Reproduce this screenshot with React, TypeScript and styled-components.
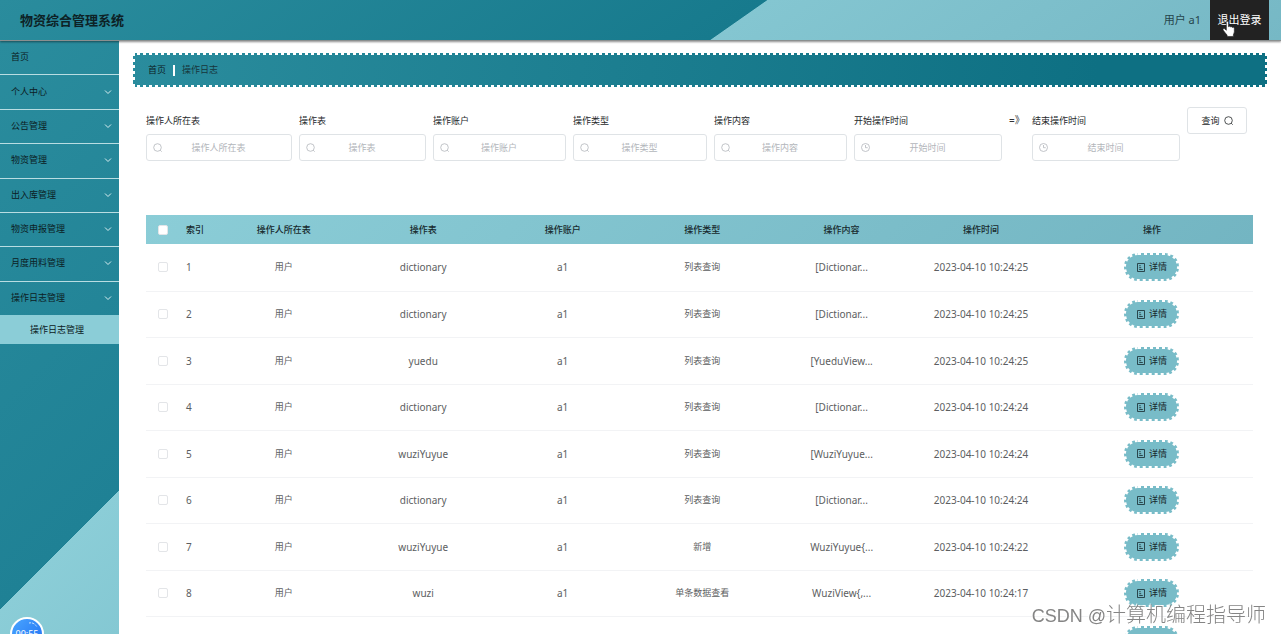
import React from 'react';
import styled, { createGlobalStyle, css } from 'styled-components';

const GlobalStyle = createGlobalStyle`
  *, *::before, *::after { box-sizing: border-box; }
  body {
    margin: 0;
    background: #fff;
    color: #222;
    font-family: "Noto Sans", "Noto Sans CJK SC", sans-serif;
    font-size: 10px;
    line-height: 14px;
  }
  button, input { font: inherit; color: inherit; }
`;

const Page = styled.div`
  display: flex;
  flex-direction: column;
  height: 100vh;
  overflow: hidden;
`;

const Header = styled.header`
  display: flex;
  align-items: center;
  flex: none;
  height: 41px;
  padding: 0 12px 0 20px;
  border-bottom: 1px solid #8b8f8f;
  box-shadow: 0 1px 2px rgba(0, 0, 0, 0.45);
  background: linear-gradient(145deg, #2a8c9d 0%, #177a8d 57.3%, #84c6d1 57.4%, #76b8c5 100%);
  z-index: 1;
`;

const Title = styled.h1`
  margin: 0;
  flex: 1;
  font-size: 13px;
  line-height: 20px;
  font-weight: 700;
  color: #0d2226;
`;

const UserName = styled.span`
  margin-right: 9px;
  font-size: 11px;
  color: #25454b;
`;

const Logout = styled.button`
  position: relative;
  align-self: stretch;
  width: 59px;
  padding: 0;
  border: 0;
  background: #222;
  color: #fff;
  font-size: 11px;
  cursor: pointer;
`;

const Pointer = styled.svg`
  position: absolute;
  left: 12px;
  top: 21px;
  width: 14px;
  height: 16px;
`;

const Body = styled.div`
  display: flex;
  flex: 1;
  min-height: 0;
`;

const Sidebar = styled.nav`
  position: relative;
  flex: none;
  width: 119px;
  overflow: hidden;
  background: linear-gradient(135deg, #2a8c9d 0%, #1f8195 79.8%, #8bcdd7 79.9%, #84c8d3 100%);
`;

const Menu = styled.ul`
  display: flex;
  flex-direction: column;
  height: 274px;
  margin: 0;
  padding: 0;
  list-style: none;
`;

const MenuItem = styled.li`
  flex: 1;
  border-bottom: 1px solid #b9dde2;
  &:last-child { border-bottom: 0; }
`;

const MenuLink = styled.a`
  display: flex;
  align-items: center;
  justify-content: space-between;
  height: 100%;
  padding: 0 7px 1px 11px;
  font-size: 9px;
  color: #0c2024;
  text-decoration: none;
`;

const Chevron = styled.svg`
  width: 8px;
  height: 8px;
  stroke: #d7edf0;
  fill: none;
`;

const SubLink = styled.a`
  display: flex;
  align-items: center;
  height: 29px;
  padding-left: 30px;
  background: #8bcdd7;
  font-size: 9px;
  color: #0c2024;
  text-decoration: none;
`;

const Timer = styled.div`
  position: absolute;
  left: 10px;
  bottom: -17px;
  width: 34px;
  height: 34px;
  padding-top: 8px;
  border: 2px solid #fff;
  border-radius: 50%;
  background: linear-gradient(135deg, #4aa5ff, #1f6ff2);
  color: #fff;
  font-size: 9px;
  text-align: center;
`;

const Spark = styled.svg`
  position: absolute;
  left: 17px;
  top: 3px;
  width: 9px;
  height: 6px;
`;

const Main = styled.main`
  flex: 1;
  min-width: 0;
  padding: 12px 14px 0;
`;

const perforated = css`
  outline: 3px dotted #fff;
  outline-offset: -2px;
`;

const Breadcrumb = styled.div`
  ${perforated}
  display: flex;
  align-items: center;
  height: 34px;
  padding-left: 15px;
  background: linear-gradient(100deg, #2a8c9d 0%, #0e7083 85%);
  font-size: 9px;
  color: #17363b;
`;

const HomeLink = styled.a`
  color: #0c2024;
  text-decoration: none;
`;

const Divider = styled.i`
  width: 2px;
  height: 11px;
  margin: 0 7px;
  background: #fff;
`;

const Content = styled.div`
  padding: 20px 14px 0 13px;
`;

const Filters = styled.form`
  display: grid;
  grid-template-columns: 146fr 127fr 133fr 134fr 133fr 148fr 16fr 148fr 60fr;
  gap: 7px;
  align-items: start;
  height: 108px;
  padding-right: 6px;
`;

const Field = styled.label`
  display: block;
  min-width: 0;
  font-size: 9px;
  color: #26292b;
`;

const FieldName = styled.span`
  display: block;
  height: 27px;
  line-height: 27px;
`;

const InputBox = styled.span`
  display: flex;
  align-items: center;
  height: 27px;
  padding: 0 6px;
  border: 1px solid #dfe3e6;
  border-radius: 3px;
  background: #fff;
`;

const Input = styled.input`
  flex: 1;
  min-width: 0;
  margin-right: 10px;
  padding: 0;
  border: 0;
  outline: 0;
  background: none;
  text-align: center;
  &::placeholder { color: #b3b6bb; opacity: 1; }
`;

const Icon = styled.svg<{ $tall?: boolean }>`
  flex: none;
  width: ${p => (p.$tall ? 8 : 9)}px;
  height: 9px;
  fill: none;
  stroke: currentColor;
`;

const FieldIcon = styled(Icon)`
  color: #b3b6bb;
`;

const Arrow = styled.span`
  line-height: 27px;
  white-space: nowrap;
  color: #333;
`;

const QueryButton = styled.button`
  display: flex;
  align-items: center;
  justify-content: center;
  gap: 4px;
  height: 27px;
  padding: 0;
  border: 1px solid #dfe3e6;
  border-radius: 3px;
  background: #fff;
  font-size: 9px;
  color: #26292b;
`;

const Table = styled.table`
  width: 100%;
  table-layout: fixed;
  border-collapse: collapse;
`;

const Head = styled.thead`
  background: linear-gradient(135deg, #8bcdd7, #73b5c2);
`;

const cell = css<{ $left?: boolean }>`
  padding: 0 0 0 ${p => (p.$left ? 7 : 0)}px;
  line-height: 12px;
  text-align: ${p => (p.$left ? 'left' : 'center')};
  white-space: nowrap;
`;

const Th = styled.th<{ $left?: boolean }>`
  ${cell}
  height: 29px;
  font-size: 9px;
  font-weight: 500;
  color: #17292d;
`;

const Row = styled.tr`
  height: 47px;
  border-bottom: 1px solid #f2f3f5;
  &:nth-child(even) { height: 46px; }
`;

const Td = styled.td<{ $left?: boolean; $han?: boolean }>`
  ${cell}
  font-size: ${p => (p.$han ? 9 : 10)}px;
  color: #5c5e61;
`;

const Check = styled.input`
  display: block;
  appearance: none;
  width: 10px;
  height: 10px;
  margin: 0 auto;
  border: 1px solid #e3e5e8;
  border-radius: 2px;
  background: #fff;
`;

const Detail = styled.button`
  ${perforated}
  display: inline-flex;
  align-items: center;
  justify-content: center;
  gap: 4px;
  width: 55px;
  height: 28px;
  padding: 0;
  border: 0;
  border-radius: 14px;
  background: #78bcc8;
  font-size: 9px;
  color: #17292d;
  vertical-align: middle;
`;

const Watermark = styled.div`
  position: fixed;
  right: 15px;
  bottom: 4px;
  z-index: 2;
  font-family: "Liberation Sans", "Noto Sans CJK SC", sans-serif;
  font-size: 20px;
  line-height: 28px;
  font-weight: 300;
  color: #858585;
  text-shadow: -1px -1px 0 rgba(255, 255, 255, 0.85);
  pointer-events: none;
`;

const Brand = styled.span`
  font-size: 18px;
`;

const menu = ['首页', '个人中心', '公告管理', '物资管理', '出入库管理', '物资申报管理', '月度用料管理', '操作日志管理'];
const textFilters = ['操作人所在表', '操作表', '操作账户', '操作类型', '操作内容'];
const columns = ['操作人所在表', '操作表', '操作账户', '操作类型', '操作内容', '操作时间', '操作'];
const rows = [
  ['dictionary', '列表查询', '[Dictionar...', '2023-04-10 10:24:25'],
  ['dictionary', '列表查询', '[Dictionar...', '2023-04-10 10:24:25'],
  ['yuedu', '列表查询', '[YueduView...', '2023-04-10 10:24:25'],
  ['dictionary', '列表查询', '[Dictionar...', '2023-04-10 10:24:24'],
  ['wuziYuyue', '列表查询', '[WuziYuyue...', '2023-04-10 10:24:24'],
  ['dictionary', '列表查询', '[Dictionar...', '2023-04-10 10:24:24'],
  ['wuziYuyue', '新增', 'WuziYuyue{...', '2023-04-10 10:24:22'],
  ['wuzi', '单条数据查看', 'WuziView{,...', '2023-04-10 10:24:17'],
  ['wuzi', '列表查询', '[WuziView{...', '2023-04-10 10:24:15'],
];

const searchShape = (
  <>
    <circle cx="4.5" cy="4.5" r="3.8" />
    <path d="M7.2 7.2 8.7 8.7" />
  </>
);

const clockShape = (
  <>
    <circle cx="4.5" cy="4.5" r="4" />
    <path d="M4.5 2v2.7h2.2" />
  </>
);

function FilterField({ name, hint, clock }: { name: string; hint: string; clock?: boolean }) {
  return (
    <Field>
      <FieldName>{name}</FieldName>
      <InputBox>
        <FieldIcon viewBox="0 0 9 9" strokeWidth="0.8" aria-hidden>{clock ? clockShape : searchShape}</FieldIcon>
        <Input type="text" placeholder={hint} />
      </InputBox>
    </Field>
  );
}

export default function App() {
  return (
    <Page>
      <GlobalStyle />
      <Header>
        <Title>物资综合管理系统</Title>
        <UserName>用户 a1</UserName>
        <Logout type="button">
          退出登录
          <Pointer viewBox="0 0 13 15" aria-hidden>
            <path
              d="M4 1.2c0-1.2 2-1.2 2 0v4.2c.4-.7 1.7-.6 1.9.2.5-.5 1.6-.4 1.8.5.6-.4 1.8-.2 1.8.9v3.2c0 1-.9 2-.9 2.8v1.5H4.7v-1.3C3.5 12 2.3 10.2 1.1 8.6.3 7.4 1.7 6.5 2.6 7.4L4 8.7z"
              fill="#fff"
              stroke="#222"
              strokeWidth="0.6"
            />
          </Pointer>
        </Logout>
      </Header>
      <Body>
        <Sidebar>
          <Menu>
            {menu.map((name, i) => (
              <MenuItem key={name}>
                <MenuLink href="#">
                  {name}
                  {i > 0 && (
                    <Chevron viewBox="0 0 8 8" aria-hidden>
                      <path d="M1 2.5 4 5.5 7 2.5" />
                    </Chevron>
                  )}
                </MenuLink>
              </MenuItem>
            ))}
          </Menu>
          <SubLink href="#">操作日志管理</SubLink>
          <Timer>
            <Spark viewBox="0 0 9 6" aria-hidden>
              <path d="M0 1Q5 0 8 5" fill="none" stroke="#cfe6ff" strokeWidth="1" strokeDasharray="2 1" />
            </Spark>
            00:55
          </Timer>
        </Sidebar>
        <Main>
          <Breadcrumb>
            <HomeLink href="#">首页</HomeLink>
            <Divider />
            <span>操作日志</span>
          </Breadcrumb>
          <Content>
            <Filters>
              {textFilters.map(name => (
                <FilterField key={name} name={name} hint={name} />
              ))}
              <FilterField name="开始操作时间" hint="开始时间" clock />
              <Arrow>=》</Arrow>
              <FilterField name="结束操作时间" hint="结束时间" clock />
              <QueryButton type="button">
                查询
                <Icon viewBox="0 0 9 9" strokeWidth="0.8" aria-hidden>{searchShape}</Icon>
              </QueryButton>
            </Filters>
            <Table>
              <colgroup>
                <col style={{ width: 33 }} />
                <col style={{ width: 35 }} />
                {columns.map((name, i) => (
                  <col key={name} style={i < 6 ? { width: '12.6%' } : undefined} />
                ))}
              </colgroup>
              <Head>
                <tr>
                  <Th><Check type="checkbox" aria-label="全选" /></Th>
                  <Th $left>索引</Th>
                  {columns.map(name => <Th key={name}>{name}</Th>)}
                </tr>
              </Head>
              <tbody>
                {rows.map(([table, kind, body, time], i) => (
                  <Row key={i}>
                    <Td><Check type="checkbox" aria-label={`选择 ${i + 1}`} /></Td>
                    <Td $left>{i + 1}</Td>
                    <Td $han>用户</Td>
                    <Td>{table}</Td>
                    <Td>a1</Td>
                    <Td $han>{kind}</Td>
                    <Td>{body}</Td>
                    <Td>{time}</Td>
                    <Td>
                      <Detail type="button">
                        <Icon $tall viewBox="0 0 8 9" strokeWidth="0.8" aria-hidden>
                          <path d="M.5.5h7v8h-7zM2.2 2.7h1.5M2.2 4.7h2M2.2 6.5h3.6" />
                        </Icon>
                        详情
                      </Detail>
                    </Td>
                  </Row>
                ))}
              </tbody>
            </Table>
          </Content>
        </Main>
      </Body>
      <Watermark><Brand>CSDN @</Brand>计算机编程指导师</Watermark>
    </Page>
  );
}
